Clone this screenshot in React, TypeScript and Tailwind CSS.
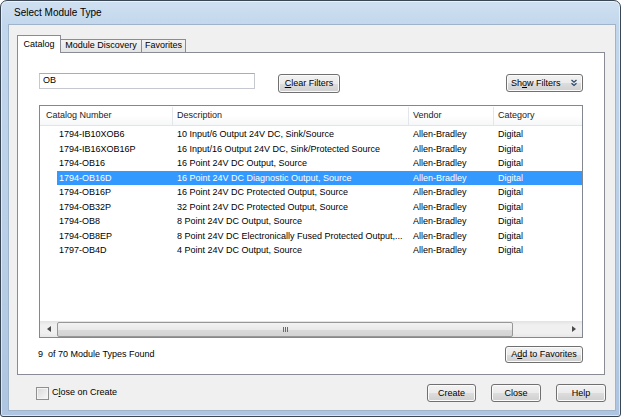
import React from 'react';

const rows = [
  ['1794-IB10XOB6', '10 Input/6 Output 24V DC, Sink/Source'],
  ['1794-IB16XOB16P', '16 Input/16 Output 24V DC, Sink/Protected Source'],
  ['1794-OB16', '16 Point 24V DC Output, Source'],
  ['1794-OB16D', '16 Point 24V DC Diagnostic Output, Source'],
  ['1794-OB16P', '16 Point 24V DC Protected Output, Source'],
  ['1794-OB32P', '32 Point 24V DC Protected Output, Source'],
  ['1794-OB8', '8 Point 24V DC Output, Source'],
  ['1794-OB8EP', '8 Point 24V DC Electronically Fused Protected Output,...'],
  ['1797-OB4D', '4 Point 24V DC Output, Source'],
];

const selected = 3;

const btn =
  'flex items-center justify-center rounded-[3px] border border-[#707070] bg-[linear-gradient(#f2f2f2_0%,#ebebeb_50%,#dddddd_51%,#cfcfcf_100%)] shadow-[inset_0_0_0_1px_#fbfbfb] text-[9px] text-black leading-none';

function App() {
  return (
    <div className="w-[624px] h-[419px] overflow-hidden bg-white font-['Liberation_Sans',Arial,sans-serif] text-black">
      <div className="flex h-[417px] w-[621px] flex-col rounded-t-[7px] rounded-b-[3px] border border-[#3a4654] bg-[linear-gradient(180deg,#cfe0f1_0%,#c2d7ec_6%,#b9cfe7_60%,#adc5e0_100%)] pl-[7px] pr-[4px] pb-[5px] shadow-[inset_0_0_0_1px_rgba(255,255,255,0.55)]">
        {/* title bar */}
        <div className="flex h-[23px] items-center pl-[6px] text-[10px] text-black">Select Module Type</div>

        {/* client area */}
        <div className="flex flex-1 flex-col border border-[#9fb4cb] bg-[#f0f0f0] pl-[8px] pr-[10px]">
          {/* tabs */}
          <div className="mt-[10px] flex h-[17px] items-end text-[9px]">
            <div className="relative z-10 -mb-px flex h-[18px] w-[44px] items-center justify-center border border-b-0 border-[#898c95] bg-white">
              Catalog
            </div>
            <div className="-ml-px flex h-[13px] w-[82px] items-center justify-center border border-b-0 border-[#898c95] bg-[linear-gradient(#f3f3f3,#e4e4e4)]">
              Module Discovery
            </div>
            <div className="-ml-px flex h-[13px] w-[45px] items-center justify-center border border-b-0 border-[#898c95] bg-[linear-gradient(#f3f3f3,#e4e4e4)]">
              Favorites
            </div>
          </div>

          {/* tab page */}
          <div className="flex h-[323px] flex-col border border-[#898c95] bg-white px-[21px] pt-[20px]">
            <div className="flex h-[20px] items-start">
              <div className="flex h-[16px] w-[216px] items-center border border-[#c5c8ce] border-t-[#abadb3] bg-white pl-[3px] text-[9px]">
                OB
              </div>
              <button className={`${btn} ml-[23px] mt-px h-[19px] w-[62px]`}>
                <span className="underline">C</span>lear Filters
              </button>
              <button className={`${btn} ml-auto mt-px h-[18px] w-[77px] !justify-start pl-[4px]`}>
                <span>
                  Sh<span className="underline">o</span>w Filters
                </span>
                <svg width="8" height="8" viewBox="0 0 8 8" className="ml-[9px]">
                  <path d="M1.5 1 L4 3.2 L6.5 1" fill="none" stroke="#2c4a6e" strokeWidth="1.3" />
                  <path d="M1.5 4.3 L4 6.5 L6.5 4.3" fill="none" stroke="#2c4a6e" strokeWidth="1.3" />
                </svg>
              </button>
            </div>

            {/* list */}
            <div className="mt-[12px] flex h-[233px] flex-col border border-[#828790] bg-white text-[9px]">
              <div className="flex h-[20px] border-b border-[#e2e4e8] bg-[linear-gradient(#ffffff_0%,#ffffff_50%,#f6f7f8_100%)] pt-px text-[#222]">
                <div className="flex w-[133px] items-center border-r border-[#e3e6ea] pl-[6px]">Catalog Number</div>
                <div className="flex w-[236px] items-center border-r border-[#e3e6ea] pl-[4px]">Description</div>
                <div className="flex w-[85px] items-center border-r border-[#e3e6ea] pl-[4px]">Vendor</div>
                <div className="flex flex-1 items-center pl-[4px]">Category</div>
              </div>
              <div className="flex-1 pt-px">
                {rows.map(([num, desc], i) => (
                  <div key={num} className="flex h-[14.5px] leading-[14.5px]">
                    <div className="w-[17px]" />
                    <div className={`flex flex-1 ${i === selected ? 'bg-[#3399ff] text-white' : ''}`}>
                      <div className="w-[116px] pl-[2px]">{num}</div>
                      <div className="w-[236px] whitespace-nowrap pl-[4px]">{desc}</div>
                      <div className="w-[85px] pl-[4px]">Allen-Bradley</div>
                      <div className="flex-1 pl-[4px]">Digital</div>
                    </div>
                  </div>
                ))}
              </div>
              {/* horizontal scrollbar */}
              <div className="flex h-[16px] items-center bg-[linear-gradient(180deg,#e2e2e2_0%,#f0f0f0_25%,#f0f0f0_75%,#e7e7e7_100%)]">
                <div className="flex w-[17px] items-center justify-center">
                  <svg width="4" height="6" viewBox="0 0 4 6">
                    <path d="M4 0 L0 3 L4 6 Z" fill="#4a4a4a" />
                  </svg>
                </div>
                <div className="flex h-[15px] w-[456px] items-center justify-center gap-[1px] rounded-[2px] border border-[#979797] bg-[linear-gradient(180deg,#f3f3f3_0%,#e9e9e9_50%,#dadada_51%,#d3d3d3_100%)]">
                  <div className="h-[5px] w-px bg-[#6a6a6a]" />
                  <div className="h-[5px] w-px bg-[#6a6a6a]" />
                  <div className="h-[5px] w-px bg-[#6a6a6a]" />
                </div>
                <div className="flex flex-1 items-center justify-end pr-[6px]">
                  <svg width="4" height="6" viewBox="0 0 4 6">
                    <path d="M0 0 L4 3 L0 6 Z" fill="#4a4a4a" />
                  </svg>
                </div>
              </div>
            </div>

            <div className="mt-[8px] flex h-[17px] items-center justify-between">
              <span className="-ml-px whitespace-pre text-[9px]">9  of 70 Module Types Found</span>
              <button className={`${btn} h-[17px] w-[78px]`}>
                A<span className="underline">d</span>d to Favorites
              </button>
            </div>
          </div>

          {/* bottom bar */}
          <div className="relative mt-[9px] flex h-[18px] items-center">
            <div className="ml-[19px] h-[13px] w-[13px] border border-[#8e8f8f] bg-[linear-gradient(135deg,#d8d8d8,#f8f8f8)] shadow-[inset_0_0_0_1px_#f4f4f4]" />
            <span className="ml-[3px] text-[9px]">
              C<span className="underline">l</span>ose on Create
            </span>
            <div className="ml-auto -mr-px flex gap-[15px]">
              <button className={`${btn} h-[18px] w-[49px]`}>Create</button>
              <button className={`${btn} h-[18px] w-[50px]`}>Close</button>
              <button className={`${btn} h-[18px] w-[50px]`}>Help</button>
            </div>
          </div>
        </div>
      </div>
    </div>
  );
}

export default App;
